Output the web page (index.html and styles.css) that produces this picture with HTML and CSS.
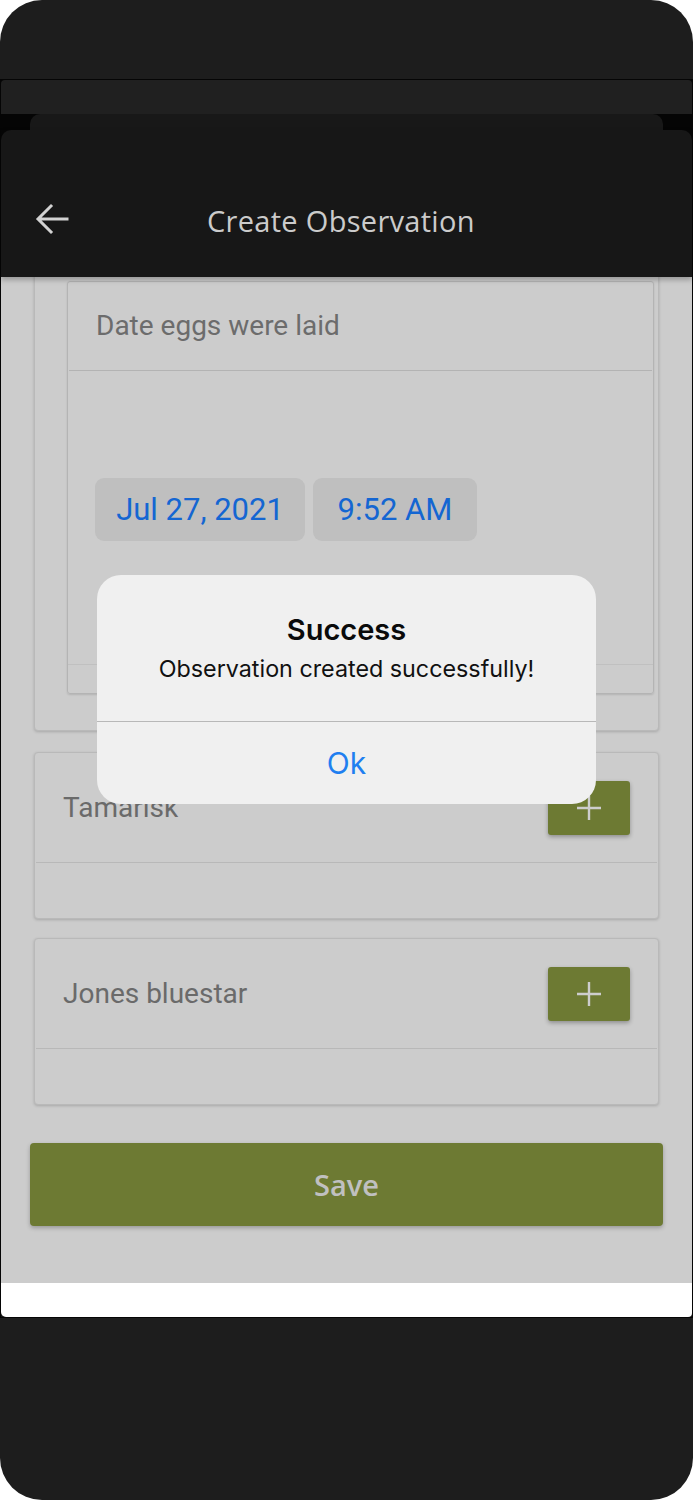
FILE: index.html
```html
<!DOCTYPE html>
<html lang="en">
<head>
<meta charset="utf-8">
<title>Create Observation</title>
<link rel="stylesheet" href="styles.css">
</head>
<body>
<div class="device">
  <div class="statusbar"></div>
  <div class="screen">
    <div class="layer-back"></div>
    <div class="layer-mid"></div>
    <div class="main">
      <header class="appbar">
        <svg class="back" width="34" height="34" viewBox="0 0 34 34" aria-hidden="true">
          <path d="M32 16 H4 M16 3 L3 16 L16 29" fill="none" stroke="#d2d2d2" stroke-width="3" stroke-linecap="square" stroke-linejoin="miter"/>
        </svg>
        <h1 class="title">Create Observation</h1>
      </header>
      <div class="content">
        <section class="card card-date">
          <div class="field">
            <div class="field-label">Date eggs were laid</div>
            <div class="field-body">
              <div class="chips">
                <span class="chip chip-date">Jul 27, 2021</span>
                <span class="chip chip-time">9:52 AM</span>
              </div>
            </div>
            <div class="field-foot"></div>
          </div>
        </section>

        <section class="card card-species">
          <div class="species-row">
            <span class="species-name">Tamarisk</span>
            <button class="add-btn" type="button" aria-label="Add">
              <svg width="26" height="26" viewBox="0 0 26 26"><path d="M13 1 V25 M1 13 H25" stroke="#cdcdcd" stroke-width="2.4" fill="none"/></svg>
            </button>
          </div>
          <div class="species-foot"></div>
        </section>

        <section class="card card-species">
          <div class="species-row">
            <span class="species-name">Jones bluestar</span>
            <button class="add-btn" type="button" aria-label="Add">
              <svg width="26" height="26" viewBox="0 0 26 26"><path d="M13 1 V25 M1 13 H25" stroke="#cdcdcd" stroke-width="2.4" fill="none"/></svg>
            </button>
          </div>
          <div class="species-foot"></div>
        </section>

        <button class="save-btn" type="button">Save</button>
      </div>
      <div class="bottom-strip"></div>

      <div class="alert" role="alertdialog">
        <div class="alert-body">
          <div class="alert-title">Success</div>
          <div class="alert-msg">Observation created successfully!</div>
        </div>
        <div class="alert-action">Ok</div>
      </div>
    </div>
  </div>
</div>
</body>
</html>
```

FILE: styles.css
```css
* { box-sizing: border-box; }

html, body {
  margin: 0;
  padding: 0;
  background: #ffffff;
}

.device {
  width: 693px;
  height: 1500px;
  background: #1d1d1d;
  border-radius: 42px;
  overflow: hidden;
  display: flex;
  flex-direction: column;
}

.statusbar {
  height: 79px;
  flex: none;
}

.screen {
  background: #050505;
  padding-top: 1px;
  padding-bottom: 1px;
  display: flex;
  flex-direction: column;
  flex: none;
}

.layer-back {
  height: 34px;
  margin: 0 1px;
  background: #202020;
  border-radius: 4px 4px 0 0;
}

.layer-mid {
  height: 16px;
  margin: 0 30px;
  background: #181818;
  border-radius: 10px 10px 0 0;
}

.main {
  position: relative;
  margin: 0 1px;
  background: #171717;
  border-radius: 10px 10px 0 0;
  display: flex;
  flex-direction: column;
}

.appbar {
  height: 147px;
  display: flex;
  align-items: center;
  padding: 33px 0 0 34px;
  position: relative;
  z-index: 2;
  box-shadow: 0 3px 5px rgba(0,0,0,0.25);
}

.back {
  flex: none;
  display: block;
}

.title {
  margin: 0 0 0 138px;
  font-family: "Open Sans", "Noto Sans", sans-serif;
  font-weight: 400;
  font-size: 29px;
  letter-spacing: 0.3px;
  color: #cbcbcb;
}

.content {
  height: 1006px;
  background: #cccccc;
  overflow: hidden;
  padding: 0 29px 0 29px;
  display: flex;
  flex-direction: column;
}

.card {
  margin: 0 4px;
  border: 1px solid #b9b9b9;
  border-radius: 4px;
  box-shadow: 0 1px 3px rgba(0,0,0,0.18);
  background: #cccccc;
}

.card-date {
  margin-top: -24px;
  padding: 27px 4px 36px 32px;
}

.field {
  border: 1px solid #b4b4b4;
  border-radius: 3px;
  box-shadow: 0 1px 2px rgba(0,0,0,0.12);
}

.field-label {
  height: 89px;
  padding: 27px 0 0 27px;
  font-family: Roboto, "Liberation Sans", sans-serif;
  font-size: 28px;
  color: #6c6c6c;
  border-bottom: 1px solid #b3b3b3;
  margin: 0 1px;
}

.field-body {
  height: 294px;
  padding: 107px 0 0 27px;
  border-bottom: 1px solid #c0c0c0;
}

.chips {
  display: flex;
  gap: 8px;
}

.chip {
  height: 63px;
  background: #bfbfbf;
  border-radius: 9px;
  display: flex;
  align-items: center;
  justify-content: center;
  font-family: Roboto, "Liberation Sans", sans-serif;
  font-size: 31px;
  color: #1466d2;
}

.chip-date { width: 210px; }
.chip-time { width: 164px; }

.field-foot {
  height: 28px;
}

.card-species {
  margin-top: 21px;
}

.card-species + .card-species {
  margin-top: 19px;
}

.species-row {
  height: 110px;
  display: flex;
  align-items: center;
  justify-content: space-between;
  padding: 0 27px 0 27px;
  border-bottom: 1px solid #b8b8b8;
  margin: 0 1px;
}

.species-name {
  font-family: Roboto, "Liberation Sans", sans-serif;
  font-size: 28px;
  color: #6a6a6a;
}

.add-btn {
  width: 82px;
  height: 54px;
  border: none;
  border-radius: 3px;
  background: #6d7a33;
  box-shadow: 0 2px 4px rgba(0,0,0,0.3);
  display: flex;
  align-items: center;
  justify-content: center;
  padding: 0;
}

.add-btn svg { display: block; }

.species-foot {
  height: 55px;
}

.save-btn {
  margin-top: 38px;
  height: 83px;
  width: 100%;
  border: none;
  border-radius: 4px;
  background: #6d7a33;
  box-shadow: 0 2px 4px rgba(0,0,0,0.25);
  font-family: "Open Sans", "Noto Sans", sans-serif;
  font-size: 29px;
  font-weight: 600;
  color: #c0c0c0;
  padding: 0;
}

.bottom-strip {
  height: 34px;
  background: #ffffff;
  border-radius: 0 0 4px 5px;
}

.alert {
  position: absolute;
  left: 96px;
  top: 445px;
  width: 499px;
  height: 229px;
  background: #f0f0f0;
  border-radius: 24px;
  z-index: 5;
  display: flex;
  flex-direction: column;
  overflow: hidden;
}

.alert-body {
  height: 147px;
  border-bottom: 1px solid #b8b8b8;
  display: flex;
  flex-direction: column;
  align-items: center;
  padding-top: 35px;
}

.alert-title {
  font-family: Inter, Roboto, sans-serif;
  font-weight: 600;
  font-size: 29px;
  color: #0a0a0a;
  line-height: 40px;
}

.alert-msg {
  margin-top: 4px;
  font-family: Inter, Roboto, sans-serif;
  font-size: 23.3px;
  color: #111111;
  line-height: 30px;
}

.alert-action {
  flex: 1;
  display: flex;
  align-items: center;
  justify-content: center;
  font-family: Inter, Roboto, sans-serif;
  font-size: 30px;
  color: #1f7ff0;
}
```
